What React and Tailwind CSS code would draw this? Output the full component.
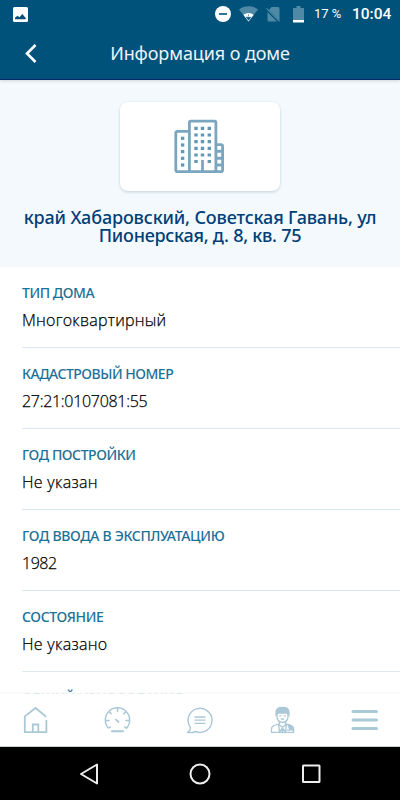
import React from 'react'

const rows = [
  { label: 'ТИП ДОМА', value: 'Многоквартирный', labelSpacing: 'tracking-[-0.45px]', spacing: 'tracking-[0.25px]' },
  { label: 'КАДАСТРОВЫЙ НОМЕР', value: '27:21:0107081:55', labelSpacing: 'tracking-[-0.5px]', spacing: 'tracking-[-0.3px]' },
  { label: 'ГОД ПОСТРОЙКИ', value: 'Не указан', labelSpacing: 'tracking-[-0.45px]', spacing: 'tracking-[0.3px]' },
  { label: 'ГОД ВВОДА В ЭКСПЛУАТАЦИЮ', value: '1982', labelSpacing: 'tracking-[-0.33px]', spacing: 'tracking-[-0.5px]' },
  { label: 'СОСТОЯНИЕ', value: 'Не указано', labelSpacing: 'tracking-[-0.37px]', spacing: 'tracking-[0.3px]' },
  { label: 'ОБЩИЙ ИЗНОС ЗДАНИЯ', value: '', labelSpacing: 'tracking-[-0.5px]', spacing: '' },
];

const StatusBar = () => (
  <div className="flex h-7 items-center pl-[13px] pr-[9px] text-white font-['Roboto',sans-serif]">
    <svg className="h-[15px] w-[15px]" viewBox="0 0 15 15">
      <rect width="15" height="15" rx="1.5" fill="#fff" />
      <path d="M2 12.300v-1.500l2.500-2 2 1.500L9.300 7l3.400 4v1.300z" fill="#00527b" />
    </svg>
    <svg className="ml-auto h-4 w-4" viewBox="0 0 16 16">
      <circle cx="8" cy="8" r="8" fill="#fff" />
      <path d="M4 8h8" stroke="#00527b" strokeWidth="1.600" />
    </svg>
    <svg className="ml-2 h-4 w-[19px]" viewBox="0 0 19 16">
      <path d="M0 3.500C5.500-.8 13.500-.8 19 3.500L9.500 15.500z" fill="#4f89a5" />
      <path d="M4.300 8.800Q9.500 5 14.700 8.800L9.500 15.500z" fill="#fff" />
      <path d="M9.500 8.200v2M7.200 11.200h4.600l-2.300 3z" fill="#00527b" stroke="#00527b" strokeWidth=".5" />
    </svg>
    <svg className="ml-2 h-4 w-[15px]" viewBox="0 0 15 16">
      <path d="M5.500 1H12q1.500 0 1.500 1.500v12.300L3 4zM1.500 6l9.500 9.500H3q-1.500 0-1.500-1.500z" fill="#4f89a5" />
      <path d="M.5 2.300l13 13" stroke="#4f89a5" strokeWidth="1.200" />
    </svg>
    <svg className="ml-3 h-[17px] w-[11px]" viewBox="0 0 11 17">
      <path d="M3.500 0h4v2H11v12H0V2h3.500z" fill="#4f89a5" />
      <path d="M0 14h11v2.500H0z" fill="#fff" />
    </svg>
    <span className="ml-[10px] w-[28px] whitespace-nowrap text-[13px]">17 %</span>
    <span className="ml-[10px] w-[39px] whitespace-nowrap pt-0.5 text-[15.500px] font-medium">10:04</span>
  </div>
);

const Building = () => (
  <svg className="mr-0.5 h-[55px] w-[50px]" viewBox="0 0 50 55" fill="none" stroke="#7aa6bf" strokeWidth="2.800">
    <path d="M15.400 52.600V3.300q0-1.200 1.200-1.200h24.100q1.200 0 1.200 1.200v49.300" />
    <path d="M15.400 12.300H3.500q-1.700 0-1.700 1.700v36.900q0 1.700 1.700 1.700h43.400q1.700 0 1.700-1.700V27.300q0-1.700-1.700-1.700h-5" />
    <path d="M28.500 52.600V41" />
    <path d="M42 32.300h6M42 39.300h6M42 46h6" strokeWidth="3" />
    {[9.300, 16, 22.600, 29.300, 36, 42.500].map((y) => (
      <path key={y} d={`M20.300 ${y}h3.400M${y > 42 ? 33.600 : 26.800} ${y}h3.400M33.600 ${y}h3.400`} stroke="#6199b5" strokeWidth="3.200" />
    ))}
    {[19.300, 26, 32.600, 39.300, 46].map((y) => (
      <path key={y} d={`M6.900 ${y}h3.400`} stroke="#6199b5" strokeWidth="3.200" />
    ))}
  </svg>
);

const TabBar = () => (
  <div className="z-10 flex h-[55px] shrink-0 justify-between border-b border-[#c8d0d4] bg-[linear-gradient(rgba(250,250,250,0.87)_2px,#fff_2px)] pl-[22px] pr-[22px] pt-[14px]">
    <svg className="h-7 w-7" viewBox="0 0 28 28" fill="none" stroke="#abc8d7" strokeWidth="1.800">
      <path d="M24.200 10.700L13.500 2 2.800 10.400v15.800h21.600V14" />
      <path d="M10.800 26v-7.500h5.500V26" />
    </svg>
    <svg className="h-7 w-7" viewBox="0 0 28 28" fill="none" stroke="#abc8d7" strokeWidth="1.500">
      <path d="M4.500 22.200A12.200 12.200 0 1 1 22.500 22.200L20.300 20.600M4.500 22.200l2.400-1.600" />
      <path d="M13.500 2v4M5.300 5.800l2.300 2.300M21.700 5.800l-2.300 2.300M1.800 14.500h3.800M21.400 14.500h3.800" />
      <path d="M11.300 13l3.800 3.600M13.300 14.300l1.500 2.300" strokeWidth="1.700" />
      <path d="M8 25.300h11" strokeWidth="2" strokeLinecap="round" />
    </svg>
    <svg className="h-7 w-7" viewBox="0 0 28 28" fill="none" stroke="#abc8d7" strokeWidth="1.400">
      <path d="M4.400 21.500A12 12 0 1 1 9.600 25.500C7 26.800 3.500 26.600 1.900 26.200c2.100-1.200 2.700-2.700 2.500-4.700z" />
      <path d="M8.500 11h11M8.500 14.200h11M8.500 17.400h11" strokeWidth="1.300" />
    </svg>
    <svg className="h-7 w-7" viewBox="0 0 28 28" fill="none" stroke="#abc8d7" strokeWidth="1.300">
      <path d="M8 9V6q0-4.500 6.500-4.500T21 6v3l-2-2h-9z" fill="#abc8d7" />
      <path d="M9 7.500v4q1 4.800 5.500 4.800t5.500-4.800v-4M11.300 9.800h2M15.700 9.800h2M12.800 13h3.400" />
      <path d="M11.500 15.500v2.300L6 19.500q-2.500 1-2.500 3.500v3.400h22V23q0-2.500-2.500-3.500l-5.500-1.700v-2.300" />
      <path d="M10.500 18l4 3.500 4-3.500M10.500 18l1 8 3-4 3 4 1-8M14.500 21v5.500" />
      <path d="M20 18.500l3.500 1.300 2 4h-3.500z" fill="#abc8d7" />
      <path d="M18.800 24h3.500" />
    </svg>
    <svg className="h-7 w-7" viewBox="0 0 28 28" fill="none" stroke="#abc8d7" strokeWidth="3" strokeLinecap="round">
      <path d="M3 5.500H26.500M3 14H26.500M3 22.500H26.500" />
    </svg>
  </div>
);

const App = () => {
  return (
    <div className="flex h-[800px] w-[400px] flex-col overflow-hidden bg-white font-['Noto_Sans',sans-serif]">
      <div className="z-10 h-20 shrink-0 border-b border-[#00266a] bg-[#00527b] shadow-[0_1px_3px_rgba(0,0,0,0.15)]">
        <StatusBar />
        <div className="relative flex h-[51px] items-center justify-center text-white">
          <svg className="absolute left-[25px] top-4 h-[19px] w-3" viewBox="0 0 12 19" fill="none" stroke="#fff" strokeWidth="2.600">
            <path d="M10.500 1L2 9.500l8.500 8.500" />
          </svg>
          <h1 className="text-[18px] tracking-[-0.1px] text-[#eef4f7]">Информация о доме</h1>
        </div>
      </div>
      <div className="flex h-[187px] shrink-0 flex-col items-center bg-[#f3f9fc] pt-[22px]">
        <div className="flex h-[89px] w-40 items-center justify-center rounded-lg bg-white shadow-[0_1px_3px_rgba(0,50,80,0.2)]">
          <Building />
        </div>
        <div className="mt-[17px] whitespace-nowrap text-center text-[18px] font-medium leading-[18px] text-[#003e78]">
          <div className="tracking-[-0.15px]">край Хабаровский, Советская Гавань, ул</div>
          <div className="tracking-[-0.25px]">Пионерская, д. 8, кв. 75</div>
        </div>
      </div>
      <div className="-mb-0.5 min-h-0 flex-1 overflow-hidden pl-[22px]">
        {rows.map((row) => (
          <div key={row.label} className="h-[81px] border-b border-[#dbe8f0] pt-[16px]">
            <div className={`text-[14px] font-medium leading-5 text-[#1c7197] ${row.labelSpacing}`}>{row.label}</div>
            <div className={`mt-[5px] text-[16px] font-light leading-6 text-black [-webkit-text-stroke:0.25px_black] font-['Open_Sans','Noto_Sans',sans-serif] ${row.spacing}`}>{row.value}</div>
          </div>
        ))}
      </div>
      <TabBar />
      <div className="flex h-[53px] shrink-0 items-center justify-between bg-black pl-[79px] pr-[79px]">
        <svg className="h-[22px] w-5" viewBox="0 0 20 22" fill="none" stroke="#eee" strokeWidth="2">
          <path d="M18 1.500v19L2 11z" strokeLinejoin="round" />
        </svg>
        <svg className="h-[22px] w-[22px]" viewBox="0 0 22 22" fill="none" stroke="#eee" strokeWidth="2">
          <circle cx="11" cy="11" r="9.500" />
        </svg>
        <svg className="h-5 w-5" viewBox="0 0 20 20" fill="none" stroke="#eee" strokeWidth="2">
          <rect x="2" y="1.500" width="16.500" height="16.500" rx=".5" />
        </svg>
      </div>
    </div>
  );
}

export default App
